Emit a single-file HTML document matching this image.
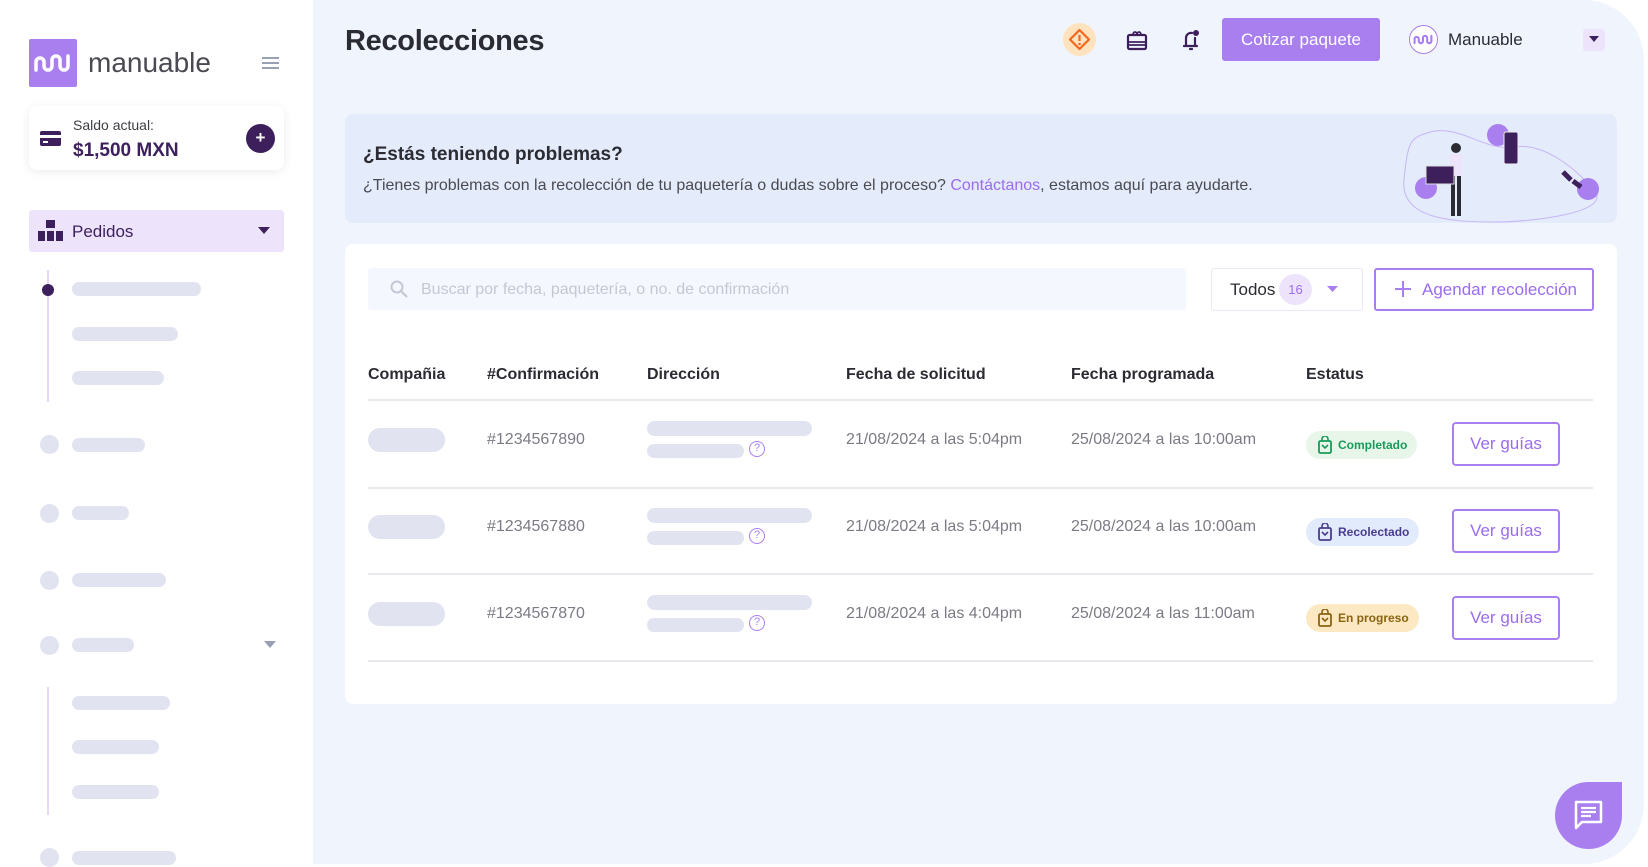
<!DOCTYPE html>
<html><head><meta charset="utf-8"><style>
*{box-sizing:border-box;margin:0;padding:0}
body{width:1648px;height:864px;overflow:hidden;background:#fff;font-family:"Liberation Sans",sans-serif;position:relative;color:#2b2b33}
.a{position:absolute}
.sk{position:absolute;background:#e1e3f0;border-radius:8px;height:14px}
.dot{position:absolute;width:19px;height:19px;border-radius:50%;background:#e1e3f0}
.main{position:absolute;left:313px;top:0;width:1331px;height:864px;background:#f0f4fc;border-radius:0 60px 60px 0}
.th{position:absolute;top:366px;font-size:16px;font-weight:bold;color:#2b2b33}
.td{position:absolute;font-size:16px;color:#7b7b85}
.line{position:absolute;left:368px;width:1225px;height:2px;background:#e8e9ee}
.btn{position:absolute;left:1452px;width:108px;height:44px;border:2px solid #a97ff0;border-radius:4px;color:#9b6cf0;font-size:17px;text-align:center;line-height:40px}
.badge{position:absolute;left:1306px;height:28px;border-radius:14px;font-size:12px;font-weight:bold;line-height:28px;padding:0 10px 0 32px}
</style></head><body>
<div class="a" style="left:29px;top:39px;width:48px;height:48px;background:#a97ff0;border-radius:2px"></div>
<svg class="a" style="left:33px;top:52px" width="40" height="22" viewBox="0 0 40 22"><path d="M3 18V10a4 4 0 0 1 8 0v4a4 4 0 0 0 8 0V8a4 4 0 0 1 8 0v6a4 4 0 0 0 8 0V4" fill="none" stroke="#fff" stroke-width="3.5" stroke-linecap="round"/></svg>
<div class="a" style="left:88px;top:47px;font-size:28px;color:#4a4a52">manuable</div>
<svg class="a" style="left:261px;top:56px" width="19" height="14"><path d="M1 2h17M1 7h17M1 12h17" stroke="#9aa0b4" stroke-width="2"/></svg>
<div class="a" style="left:29px;top:106px;width:255px;height:64px;background:#fff;border-radius:8px;box-shadow:0 2px 10px rgba(0,0,0,.08)"></div>
<svg class="a" style="left:40px;top:131px" width="21" height="15"><rect x="0" y="0" width="21" height="15" rx="2" fill="#3d1f5c"/><rect x="0" y="4" width="21" height="3" fill="#fff"/><rect x="3" y="10" width="5" height="2" fill="#fff"/></svg>
<div class="a" style="left:73px;top:117px;font-size:14px;color:#3d3d45">Saldo actual:</div>
<div class="a" style="left:73px;top:140px;font-size:19px;font-weight:bold;color:#3d1f5c">$1,500 MXN</div>
<div class="a" style="left:246px;top:124px;width:29px;height:29px;border-radius:50%;background:#3d1f5c;color:#fff;text-align:center;line-height:28px;font-size:17px;font-weight:bold">+</div>
<div class="a" style="left:29px;top:210px;width:255px;height:42px;background:#ede4fb;border-radius:3px"></div>
<svg class="a" style="left:38px;top:220px" width="25" height="22"><rect x="8" y="0" width="9" height="8" fill="#3d1f5c"/><rect x="0" y="11" width="7" height="10" fill="#3d1f5c"/><rect x="9" y="11" width="7" height="10" fill="#3d1f5c"/><rect x="18" y="11" width="7" height="10" fill="#3d1f5c"/></svg>
<div class="a" style="left:72px;top:222px;font-size:17px;color:#3d1f5c">Pedidos</div>
<svg class="a" style="left:258px;top:227px" width="12" height="8"><path d="M0 0h12L6 7z" fill="#3d1f5c"/></svg>
<div class="a" style="left:47px;top:270px;width:2px;height:132px;background:#e5d7fb"></div>
<div class="a" style="left:42px;top:284px;width:12px;height:12px;border-radius:50%;background:#3d1f5c"></div>
<div class="sk" style="left:72px;top:282px;width:129px"></div>
<div class="sk" style="left:72px;top:327px;width:106px"></div>
<div class="sk" style="left:72px;top:371px;width:92px"></div>
<div class="dot" style="left:40px;top:435px"></div><div class="sk" style="left:72px;top:438px;width:73px"></div>
<div class="dot" style="left:40px;top:504px"></div><div class="sk" style="left:72px;top:506px;width:57px"></div>
<div class="dot" style="left:40px;top:571px"></div><div class="sk" style="left:72px;top:573px;width:94px"></div>
<div class="dot" style="left:40px;top:636px"></div><div class="sk" style="left:72px;top:638px;width:62px"></div>
<svg class="a" style="left:264px;top:641px" width="12" height="8"><path d="M0 0h12L6 7z" fill="#9aa0b4"/></svg>
<div class="a" style="left:47px;top:687px;width:2px;height:128px;background:#e5d7fb"></div>
<div class="sk" style="left:72px;top:696px;width:98px"></div>
<div class="sk" style="left:72px;top:740px;width:87px"></div>
<div class="sk" style="left:72px;top:785px;width:87px"></div>
<div class="dot" style="left:40px;top:848px"></div><div class="sk" style="left:72px;top:851px;width:104px"></div>
<div class="main"></div>
<div class="a" style="left:345px;top:25px;font-size:29px;font-weight:bold;color:#2b2b33;letter-spacing:-.3px">Recolecciones</div>
<div class="a" style="left:1063px;top:23px;width:33px;height:33px;border-radius:50%;background:#ffe3bf"></div>
<svg class="a" style="left:1068px;top:28px" width="23" height="23"><path d="M11.5 2L21 11.5 11.5 21 2 11.5z" fill="none" stroke="#f5661e" stroke-width="2.2" stroke-linejoin="round"/><path d="M11.5 7v6" stroke="#f5661e" stroke-width="2.2"/><circle cx="11.5" cy="16" r="1.3" fill="#f5661e"/></svg>
<svg class="a" style="left:1126px;top:29px" width="22" height="22"><rect x="2" y="6" width="18" height="14" rx="1.5" fill="none" stroke="#3d1f5c" stroke-width="2.2"/><path d="M2 13h18M2 16h18" stroke="#3d1f5c" stroke-width="1.8"/><path d="M7 6c0-4 4-4 4 0c0-4 4-4 4 0" fill="none" stroke="#3d1f5c" stroke-width="1.8"/></svg>
<svg class="a" style="left:1180px;top:28px" width="22" height="24"><path d="M4 18h13M6 18V10a5 5 0 0 1 6-5M15 10v8M10 21h2" fill="none" stroke="#3d1f5c" stroke-width="2.2" stroke-linecap="round"/><circle cx="16" cy="5" r="3" fill="#3d1f5c"/></svg>
<div class="a" style="left:1222px;top:18px;width:158px;height:43px;background:#a97ff0;border-radius:3px;color:#fff;font-size:17px;text-align:center;line-height:43px">Cotizar paquete</div>
<div class="a" style="left:1409px;top:25px;width:29px;height:29px;border-radius:50%;border:1.5px solid #a97ff0;background:#fff"></div>
<svg class="a" style="left:1413px;top:33px" width="21" height="13" viewBox="0 0 40 22"><path d="M3 18V10a4 4 0 0 1 8 0v4a4 4 0 0 0 8 0V8a4 4 0 0 1 8 0v6a4 4 0 0 0 8 0V4" fill="none" stroke="#a97ff0" stroke-width="4" stroke-linecap="round"/></svg>
<div class="a" style="left:1448px;top:30px;font-size:17px;color:#2b2b33">Manuable</div>
<div class="a" style="left:1583px;top:29px;width:22px;height:22px;background:#ede4fb;border-radius:3px"></div>
<svg class="a" style="left:1589px;top:36px" width="10" height="7"><path d="M0 0h10L5 6z" fill="#3d1f5c"/></svg>
<div class="a" style="left:345px;top:114px;width:1272px;height:109px;background:#e4ebfa;border-radius:8px"></div>
<div class="a" style="left:363px;top:144px;font-size:19px;font-weight:bold;color:#2b2b33">¿Estás teniendo problemas?</div>
<div class="a" style="left:363px;top:177px;font-size:16px;color:#4a4a52">¿Tienes problemas con la recolección de tu paquetería o dudas sobre el proceso? <span style="color:#9b6cf0">Contáctanos</span>, estamos aquí para ayudarte.</div>
<svg class="a" style="left:1400px;top:120px" width="205" height="105"><path d="M30 12c30-8 55 20 85 15s65 25 80 45-60 30-100 30S0 100 4 60 10 18 30 12z" fill="none" stroke="#c7b4f5" stroke-width="1"/><circle cx="26" cy="68" r="11" fill="#a97ff0"/><circle cx="98" cy="15" r="11" fill="#a97ff0"/><circle cx="188" cy="69" r="11" fill="#a97ff0"/><rect x="104" y="12" width="14" height="32" rx="2" fill="#3d1f5c" stroke="#eee"/><path d="M163 52l8 8M173 61l8 6" stroke="#3d1f5c" stroke-width="5"/><circle cx="56" cy="28" r="5" fill="#2b2b33"/><rect x="50" y="34" width="12" height="22" fill="#ede4fb"/><path d="M53 56v40M59 56v40" stroke="#2b2b33" stroke-width="4"/><rect x="26" y="46" width="28" height="18" fill="#3d1f5c" stroke="#ddd"/></svg>
<div class="a" style="left:345px;top:244px;width:1272px;height:460px;background:#fff;border-radius:8px"></div>
<div class="a" style="left:368px;top:268px;width:818px;height:42px;background:#f4f7fd;border-radius:3px"></div>
<svg class="a" style="left:390px;top:280px" width="18" height="18"><circle cx="7" cy="7" r="5.5" fill="none" stroke="#c4c8d4" stroke-width="2"/><path d="M11 11l6 6" stroke="#c4c8d4" stroke-width="2.2"/></svg>
<div class="a" style="left:421px;top:281px;font-size:16px;color:#c4c8d4">Buscar por fecha, paquetería, o no. de confirmación</div>
<div class="a" style="left:1211px;top:268px;width:152px;height:43px;border:1.5px solid #ece6f8;border-radius:3px;background:#fff"></div>
<div class="a" style="left:1230px;top:280px;font-size:17px;color:#2b2b33">Todos</div>
<div class="a" style="left:1279px;top:274px;width:33px;height:31px;border-radius:50%;background:#ede4fb;color:#9b6cf0;font-size:13px;text-align:center;line-height:31px">16</div>
<svg class="a" style="left:1327px;top:286px" width="11" height="7"><path d="M0 0h11L5.5 6z" fill="#a97ff0"/></svg>
<div class="a" style="left:1374px;top:268px;width:220px;height:43px;border:2px solid #a97ff0;border-radius:3px;color:#9b6cf0;font-size:17px;line-height:39px;padding-left:46px">Agendar recolección</div>
<svg class="a" style="left:1395px;top:281px" width="16" height="16"><path d="M8 0v16M0 8h16" stroke="#a97ff0" stroke-width="2"/></svg>
<div class="th" style="left:368px">Compañia</div>
<div class="th" style="left:487px">#Confirmación</div>
<div class="th" style="left:647px">Dirección</div>
<div class="th" style="left:846px">Fecha de solicitud</div>
<div class="th" style="left:1071px">Fecha programada</div>
<div class="th" style="left:1306px">Estatus</div>
<div class="line" style="top:399px"></div>
<div class="sk" style="left:368px;top:428px;width:77px;height:24px;border-radius:12px"></div>
<div class="td" style="left:487px;top:431px">#1234567890</div>
<div class="sk" style="left:647px;top:421px;width:165px;height:15px"></div>
<div class="sk" style="left:647px;top:444px;width:97px;height:14px"></div>
<div class="a" style="left:749px;top:441px;width:16px;height:16px;border:1.5px solid #a97ff0;border-radius:50%;color:#a97ff0;font-size:11px;text-align:center;line-height:13px">?</div>
<div class="td" style="left:846px;top:431px">21/08/2024 a las 5:04pm</div>
<div class="td" style="left:1071px;top:431px">25/08/2024 a las 10:00am</div>
<div class="badge" style="top:431px;background:#e8f6ea;color:#1a9a5a">Completado</div>
<svg class="a" style="left:1318px;top:436px" width="14" height="18"><rect x="1" y="5" width="12" height="12" rx="1.5" fill="none" stroke="#1a9a5a" stroke-width="1.8"/><path d="M4 5V3a3 3 0 0 1 6 0v2M4 9l3 3 3-3" fill="none" stroke="#1a9a5a" stroke-width="1.6"/></svg>
<div class="btn" style="top:422px">Ver guías</div>
<div class="line" style="top:487px"></div>
<div class="sk" style="left:368px;top:515px;width:77px;height:24px;border-radius:12px"></div>
<div class="td" style="left:487px;top:518px">#1234567880</div>
<div class="sk" style="left:647px;top:508px;width:165px;height:15px"></div>
<div class="sk" style="left:647px;top:531px;width:97px;height:14px"></div>
<div class="a" style="left:749px;top:528px;width:16px;height:16px;border:1.5px solid #a97ff0;border-radius:50%;color:#a97ff0;font-size:11px;text-align:center;line-height:13px">?</div>
<div class="td" style="left:846px;top:518px">21/08/2024 a las 5:04pm</div>
<div class="td" style="left:1071px;top:518px">25/08/2024 a las 10:00am</div>
<div class="badge" style="top:518px;background:#e2ebfc;color:#4a3c8f">Recolectado</div>
<svg class="a" style="left:1318px;top:523px" width="14" height="18"><rect x="1" y="5" width="12" height="12" rx="1.5" fill="none" stroke="#4a3c8f" stroke-width="1.8"/><path d="M4 5V3a3 3 0 0 1 6 0v2M4 9l3 3 3-3" fill="none" stroke="#4a3c8f" stroke-width="1.6"/></svg>
<div class="btn" style="top:509px">Ver guías</div>
<div class="line" style="top:573px"></div>
<div class="sk" style="left:368px;top:602px;width:77px;height:24px;border-radius:12px"></div>
<div class="td" style="left:487px;top:605px">#1234567870</div>
<div class="sk" style="left:647px;top:595px;width:165px;height:15px"></div>
<div class="sk" style="left:647px;top:618px;width:97px;height:14px"></div>
<div class="a" style="left:749px;top:615px;width:16px;height:16px;border:1.5px solid #a97ff0;border-radius:50%;color:#a97ff0;font-size:11px;text-align:center;line-height:13px">?</div>
<div class="td" style="left:846px;top:605px">21/08/2024 a las 4:04pm</div>
<div class="td" style="left:1071px;top:605px">25/08/2024 a las 11:00am</div>
<div class="badge" style="top:604px;background:#fde8c4;color:#8a6410">En progreso</div>
<svg class="a" style="left:1318px;top:609px" width="14" height="18"><rect x="1" y="5" width="12" height="12" rx="1.5" fill="none" stroke="#8a6410" stroke-width="1.8"/><path d="M4 5V3a3 3 0 0 1 6 0v2M4 9l3 3 3-3" fill="none" stroke="#8a6410" stroke-width="1.6"/></svg>
<div class="btn" style="top:596px">Ver guías</div>
<div class="line" style="top:660px"></div>
<div class="a" style="left:1555px;top:782px;width:67px;height:67px;background:#a97ff0;border-radius:34px 0 34px 34px"></div>
<svg class="a" style="left:1574px;top:800px" width="30" height="30"><path d="M2 2h25v20H8l-6 6z" fill="none" stroke="#fff" stroke-width="2.5" stroke-linejoin="round"/><path d="M7 8h15M7 12h15M7 16h10" stroke="#fff" stroke-width="2.2"/></svg>
</body></html>
